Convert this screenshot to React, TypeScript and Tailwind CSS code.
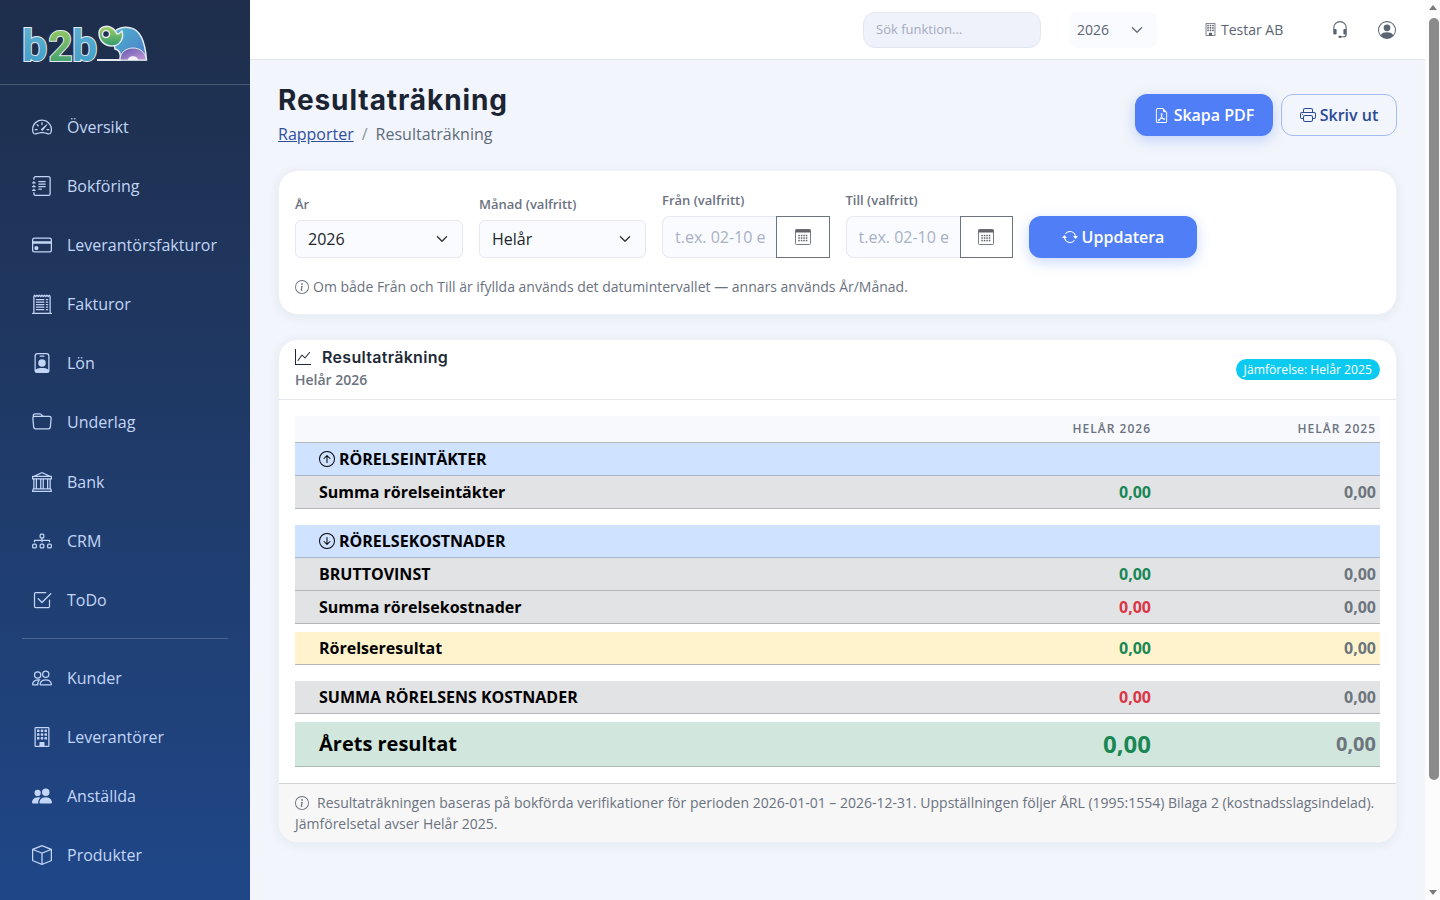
import {
  BsArrowDownCircle,
  BsArrowRepeat,
  BsArrowUpCircle,
  BsBank,
  BsBox,
  BsBuilding,
  BsCheck2Square,
  BsChevronDown,
  BsCreditCard,
  BsDiagram3,
  BsFileEarmarkPdf,
  BsFolder,
  BsGraphUp,
  BsHeadset,
  BsInfoCircle,
  BsJournalText,
  BsPeople,
  BsPeopleFill,
  BsPersonBadge,
  BsPersonCircle,
  BsPrinter,
  BsReceiptCutoff,
  BsSpeedometer2,
} from 'react-icons/bs';

const navTop = [
  { icon: BsSpeedometer2, label: 'Översikt' },
  { icon: BsJournalText, label: 'Bokföring' },
  { icon: BsCreditCard, label: 'Leverantörsfakturor' },
  { icon: BsReceiptCutoff, label: 'Fakturor' },
  { icon: BsPersonBadge, label: 'Lön' },
  { icon: BsFolder, label: 'Underlag' },
  { icon: BsBank, label: 'Bank' },
  { icon: BsDiagram3, label: 'CRM' },
  { icon: BsCheck2Square, label: 'ToDo' },
];

const navBottom = [
  { icon: BsPeople, label: 'Kunder' },
  { icon: BsBuilding, label: 'Leverantörer' },
  { icon: BsPeopleFill, label: 'Anställda' },
  { icon: BsBox, label: 'Produkter' },
];

function Logo() {
  return (
    <svg width="130" height="62" viewBox="20 10 130 62">
      <defs>
        <linearGradient id="lb" x1="0" y1="0" x2="0" y2="1">
          <stop offset="0" stopColor="#62b5d6" />
          <stop offset="1" stopColor="#3f9ac4" />
        </linearGradient>
        <linearGradient id="lg" x1="0" y1="0" x2="0" y2="1">
          <stop offset="0" stopColor="#a5cf5f" />
          <stop offset="1" stopColor="#2f9a72" />
        </linearGradient>
        <linearGradient id="le" x1="0" y1="0" x2="1" y2="1">
          <stop offset="0" stopColor="#4fb7cf" />
          <stop offset="1" stopColor="#4a78c8" />
        </linearGradient>
        <linearGradient id="lp" x1="0" y1="0" x2="1" y2="1">
          <stop offset="0" stopColor="#5f55ad" />
          <stop offset="1" stopColor="#c69ad9" />
        </linearGradient>
      </defs>
      <g className="font-['Roboto',sans-serif] font-bold" fontSize="45" stroke="#e6e9ee" strokeWidth="2" style={{ paintOrder: 'stroke' }}>
        <text x="22" y="60.5" fill="url(#lb)">b</text>
        <text x="48.5" y="60.5" fill="url(#lg)" fontSize="42">2</text>
        <text x="72" y="60.5" fill="url(#lb)">b</text>
      </g>
      <path d="M97 60h24" stroke="#e6e9ee" strokeWidth="2" />
      <path d="M112 34c5-6 12-8 19-6 9 2 14 12 15.5 32H120c1-6 0-10-5-11z" fill="url(#le)" stroke="#e6e9ee" strokeWidth="1.5" />
      <path d="M120 60c0-16 26-16 26 0z" fill="url(#lp)" stroke="#e6e9ee" strokeWidth="1" />
      <path d="M128 60c0-5 10-5 10 0z" fill="#f3f3f5" />
      <path d="M99 33c0-7 9-8 13-5 4 2 4 5 5 6 3 0 4-3 5-3 2 6-1 15-10 15-8 0-13-6-13-13z" fill="url(#lg)" stroke="#e6e9ee" strokeWidth="1.5" />
      <circle cx="106" cy="34" r="3.5" fill="#1f3150" stroke="#e6e9ee" strokeWidth="1.5" />
    </svg>
  );
}

function NavItem({ icon: Icon, label }: { icon: typeof BsBank; label: string }) {
  return (
    <div className="flex h-[59.1px] items-center gap-[15px] pl-[32px] text-[16px] text-[#c3d6f7]">
      <Icon size={20} className="shrink-0" />
      <span>{label}</span>
    </div>
  );
}

function Sidebar() {
  return (
    <aside className="flex h-[900px] w-[250px] shrink-0 flex-col overflow-hidden bg-gradient-to-b from-[#1e2e4b] to-[#1f4788]">
      <div className="flex h-[85px] shrink-0 items-start border-b border-white/20 pl-[20px] pt-[10px]">
        <Logo />
      </div>
      <nav className="pt-[12.4px]">
        {navTop.map((item) => (
          <NavItem key={item.label} {...item} />
        ))}
        <div className="mx-[22px] mb-[9.4px] mt-[8.6px] border-t border-white/20" />
        {navBottom.map((item) => (
          <NavItem key={item.label} {...item} />
        ))}
      </nav>
    </aside>
  );
}

function TopBar() {
  return (
    <header className="flex h-[60px] shrink-0 items-center border-b border-[#e2e6ee] bg-white pl-[613px] text-[14px] text-[#5b6472]">
      <div className="flex h-[36px] w-[178px] items-center rounded-[12px] border border-[#e3e7f0] bg-[#eff2fa] pl-[12px] text-[13px] text-[#a3abbd]">
        Sök funktion...
      </div>
      <div className="ml-[28px] flex h-[36px] w-[88px] items-center justify-between rounded-[8px] bg-[#fafbfe] pl-[8px] pr-[14px]">
        <span>2026</span>
        <BsChevronDown size={12} className="stroke-[1]" />
      </div>
      <div className="ml-[47px] flex items-center gap-[4px]">
        <BsBuilding size={13} />
        <span>Testar AB</span>
      </div>
      <BsHeadset size={18} className="ml-[48px]" />
      <BsPersonCircle size={18} className="ml-[29px]" />
    </header>
  );
}

function SelectField({ label, value, width }: { label: string; value: string; width: string }) {
  return (
    <div className={width}>
      <div className="mb-[6px] text-[13px] font-[550] leading-[20px] text-[#6b7280]">{label}</div>
      <div className="flex h-[38px] items-center justify-between rounded-[6px] border border-[#e5e8f0] bg-[#fafbfe] pl-[12px] pr-[14px] text-[16px] text-[#212529]">
        <span>{value}</span>
        <BsChevronDown size={12} className="stroke-[1]" />
      </div>
    </div>
  );
}

function CalendarGlyph() {
  return (
    <svg width="16" height="16" viewBox="0 0 16 16">
      <rect x="0.5" y="0.5" width="15" height="15" rx="1" fill="#fff" stroke="#7a7d80" />
      <rect x="0.5" y="0.5" width="15" height="3" fill="#5f6368" />
      {[6.5, 9, 11.5].map((y) =>
        [4, 6.5, 9, 11.5].map((x) => <rect key={`${x}-${y}`} x={x - 0.7} y={y - 0.7} width="1.5" height="1.5" fill="#5f6368" />),
      )}
    </svg>
  );
}

function DateField({ label }: { label: string }) {
  return (
    <div className="w-[167.5px]">
      <div className="mb-[6px] text-[13px] font-[550] leading-[20px] text-[#6b7280]">{label}</div>
      <div className="flex h-[42px]">
        <input
          readOnly
          placeholder="t.ex. 02-10 eller 2026-02-10"
          className="w-[114px] min-w-0 rounded-l-[8px] border border-r-0 border-[#e5e8f0] bg-[#fafbfe] pl-[12px] pr-[10px] text-[16px] outline-none placeholder:text-[#a8b0c5]"
        />
        <div className="flex flex-1 items-center justify-center border border-[#6c757d] bg-white">
          <CalendarGlyph />
        </div>
      </div>
    </div>
  );
}

function FilterCard() {
  return (
    <section className="rounded-[20px] border border-[#eef1f7] bg-white px-[16px] pb-[17px] pt-[19px] shadow-[0_2px_12px_rgba(30,50,90,0.07)]">
      <div className="flex items-end gap-[16px]">
        <SelectField label="År" value="2026" width="w-[168px]" />
        <SelectField label="Månad (valfritt)" value="Helår" width="w-[167px]" />
        <DateField label="Från (valfritt)" />
        <DateField label="Till (valfritt)" />
        <button className="flex h-[42px] w-[168px] items-center justify-center gap-[4px] rounded-[12px] bg-[#4f7ef7] text-[16px] font-semibold text-white shadow-[0_4px_14px_rgba(79,126,247,0.3)]">
          <BsArrowRepeat size={16} />
          Uppdatera
        </button>
      </div>
      <p className="mt-[18px] flex items-center gap-[4px] text-[14px] leading-[21px] text-[#6b7280]">
        <BsInfoCircle size={14} />
        Om både Från och Till är ifyllda används det datumintervallet — annars används År/Månad.
      </p>
    </section>
  );
}

type Tone = 'green' | 'red';

const toneClass: Record<Tone, string> = {
  green: 'text-[#198754]',
  red: 'text-[#dc3545]',
};

function DataRow({ label, tone, bg, height = 'h-[33px]' }: { label: string; tone: Tone; bg: string; height?: string }) {
  return (
    <tr className={`border-b border-[#b5b6b8] ${height} ${bg}`}>
      <td className="pl-[24px] text-[#000]">{label}</td>
      <td className={`pr-[4px] text-right ${toneClass[tone]}`}>0,00</td>
      <td className="pr-[4px] text-right text-[#6c757d]">0,00</td>
    </tr>
  );
}

function SectionRow({ label, icon: Icon, height }: { label: string; icon: typeof BsBank; height: string }) {
  return (
    <tr className={`border-b border-[#a9b5ca] bg-[#cfe2ff] ${height}`}>
      <td colSpan={3} className="pl-[24px] text-[#000]">
        <span className="flex items-center gap-[4px]">
          <Icon size={16} />
          {label}
        </span>
      </td>
    </tr>
  );
}

function Spacer({ height }: { height: string }) {
  return (
    <tr className={height}>
      <td colSpan={3} />
    </tr>
  );
}

function ResultTable() {
  return (
    <table className="w-full border-collapse text-[16px] font-bold">
      <thead>
        <tr className="h-[26px] border-b border-[#b5b6b8] bg-[#f8f9fc] text-[12px] tracking-[1px] text-[#6b7280]">
          <th />
          <th className="w-[225px] pr-[4px] text-right font-[550]">HELÅR 2026</th>
          <th className="w-[225px] pr-[4px] text-right font-[550]">HELÅR 2025</th>
        </tr>
      </thead>
      <tbody>
        <SectionRow label="RÖRELSEINTÄKTER" icon={BsArrowUpCircle} height="h-[33px]" />
        <DataRow label="Summa rörelseintäkter" tone="green" bg="bg-[#e2e3e5]" />
        <Spacer height="h-[17px]" />
        <SectionRow label="RÖRELSEKOSTNADER" icon={BsArrowDownCircle} height="h-[32px]" />
        <DataRow label="BRUTTOVINST" tone="green" bg="bg-[#e2e3e5]" />
        <DataRow label="Summa rörelsekostnader" tone="red" bg="bg-[#e2e3e5]" />
        <Spacer height="h-[9px]" />
        <DataRow label="Rörelseresultat" tone="green" bg="bg-[#fff3cd]" height="h-[32px]" />
        <Spacer height="h-[17px]" />
        <DataRow label="SUMMA RÖRELSENS KOSTNADER" tone="red" bg="bg-[#e2e3e5]" height="h-[32px]" />
        <Spacer height="h-[9px]" />
        <tr className="h-[44px] border-b border-[#a9b9b1] bg-[#d1e7dd]">
          <td className="pl-[24px] text-[20px] font-bold text-[#000]">Årets resultat</td>
          <td className="pr-[4px] text-right text-[24px] font-bold text-[#198754]">0,00</td>
          <td className="pr-[4px] text-right text-[20px] font-bold text-[#6c757d]">0,00</td>
        </tr>
      </tbody>
    </table>
  );
}

function ResultCard() {
  return (
    <section className="mt-[24px] overflow-hidden rounded-[20px] border border-[#eef1f7] bg-white shadow-[0_2px_12px_rgba(30,50,90,0.07)]">
      <div className="flex h-[60px] items-center justify-between border-b border-[#e5e8f0] px-[16px]">
        <div className="-mt-[4px]">
          <div className="flex items-center gap-[11px] font-['Inter',sans-serif] text-[16px] font-semibold leading-[24px] tracking-[0.3px] text-[#1f2937]">
            <BsGraphUp size={16} />
            Resultaträkning
          </div>
          <div className="text-[14px] font-semibold leading-[21px] text-[#6b7280]">Helår 2026</div>
        </div>
        <span className="rounded-full bg-[#0dcaf0] px-[8px] py-[2px] text-[12.2px] font-medium leading-[17px] text-white">Jämförelse: Helår 2025</span>
      </div>
      <div className="px-[16px] pb-[16px] pt-[16px]">
        <ResultTable />
      </div>
      <div className="border-t border-[#d3d4d6] bg-[#f7f7f7] px-[16px] py-[8px] text-[14px] leading-[21px] text-[#6b7280]">
        <BsInfoCircle size={14} className="mr-[8px] inline-block align-[-2px]" />
        Resultaträkningen baseras på bokförda verifikationer för perioden 2026-01-01 – 2026-12-31. Uppställningen följer ÅRL (1995:1554) Bilaga 2 (kostnadsslagsindelad). Jämförelsetal avser Helår 2025.
      </div>
    </section>
  );
}

function PageHeader() {
  return (
    <div className="mb-[24px] flex items-center justify-between">
      <div>
        <h1 className="font-['Inter',sans-serif] text-[28px] font-bold leading-[36px] tracking-[0.9px] text-[#1b2433]">Resultaträkning</h1>
        <div className="mt-[4px] flex items-center gap-[8px] text-[16px] leading-[24px] text-[#5f6b7a]">
          <span className="text-[#2f4f9e] underline">Rapporter</span>
          <span className="text-[#8a93a0]">/</span>
          <span>Resultaträkning</span>
        </div>
      </div>
      <div className="mt-[2px] flex gap-[8px]">
        <button className="flex h-[42px] w-[138px] items-center justify-center gap-[5px] rounded-[12px] bg-[#4f7ef7] text-[16px] font-semibold text-white shadow-[0_4px_14px_rgba(79,126,247,0.3)]">
          <BsFileEarmarkPdf size={15} />
          Skapa PDF
        </button>
        <button className="flex h-[42px] w-[116px] items-center justify-center gap-[4px] rounded-[12px] border border-[#a5bbf5] text-[16px] font-semibold text-[#2a4a94]">
          <BsPrinter size={16} />
          Skriv ut
        </button>
      </div>
    </div>
  );
}

function Scrollbar() {
  return (
    <div className="flex h-[900px] w-[15px] shrink-0 flex-col items-center bg-[#fcfcfc]">
      <div className="mt-[5px] h-0 w-0 border-x-[4px] border-b-[5px] border-x-transparent border-b-[#7a7a7a]" />
      <div className="ml-[2px] mt-[8px] h-[762px] w-[10px] rounded-b-[5px] rounded-t-[5px] bg-[#8b8b8b]" />
      <div className="mt-auto mb-[5px] h-0 w-0 border-x-[4px] border-t-[5px] border-x-transparent border-t-[#7a7a7a]" />
    </div>
  );
}

export default function App() {
  return (
    <div className="flex h-[900px] w-[1440px] overflow-hidden bg-[#f2f5fb] font-['Open_Sans',sans-serif]">
      <Sidebar />
      <main className="flex min-w-0 flex-1 flex-col">
        <TopBar />
        <div className="px-[28px] pt-[22px]">
          <PageHeader />
          <FilterCard />
          <ResultCard />
        </div>
      </main>
      <Scrollbar />
    </div>
  );
}
